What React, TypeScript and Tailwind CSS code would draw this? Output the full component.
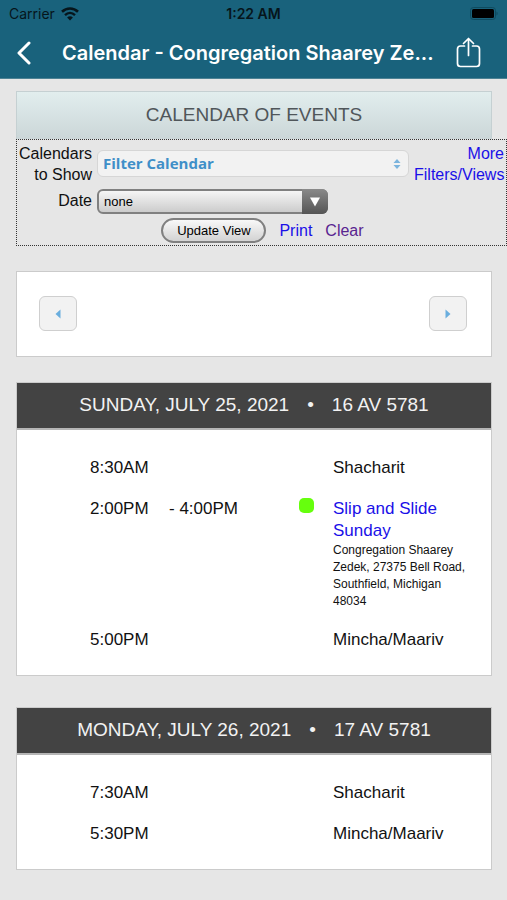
import { useState } from 'react'

type CalendarEvent = {
  start: string
  end?: string
  title: string
  location?: string
  color?: string
}

type CalendarDay = {
  date: string
  hebrewDate: string
  events: CalendarEvent[]
}

const days: CalendarDay[] = [
  {
    date: 'SUNDAY, JULY 25, 2021',
    hebrewDate: '16 AV 5781',
    events: [
      { start: '8:30AM', title: 'Shacharit' },
      {
        start: '2:00PM',
        end: '- 4:00PM',
        title: 'Slip and Slide Sunday',
        location:
          'Congregation Shaarey Zedek, 27375 Bell Road, Southfield, Michigan 48034',
        color: 'bg-[#66ff0d]',
      },
      { start: '5:00PM', title: 'Mincha/Maariv' },
    ],
  },
  {
    date: 'MONDAY, JULY 26, 2021',
    hebrewDate: '17 AV 5781',
    events: [
      { start: '7:30AM', title: 'Shacharit' },
      { start: '5:30PM', title: 'Mincha/Maariv' },
    ],
  },
]

function StatusBar() {
  return (
    <div className="grid h-[27px] grid-cols-3 items-center px-[9px] text-[14px] text-[#06151b]">
      <div className="flex items-center gap-[6px]">
        <span>Carrier</span>
        <svg aria-hidden="true" className="h-[14px] w-[18px]" viewBox="0 0 18 14" fill="none">
          <path d="M1 4.8C5.6 0.3 12.4 0.3 17 4.8" stroke="currentColor" strokeWidth="2.6" />
          <path d="M4 8.1C7 5.2 11 5.2 14 8.1" stroke="currentColor" strokeWidth="2.4" />
          <path d="M9 13.4L6.1 10.4C7.8 8.9 10.2 8.9 11.9 10.4Z" fill="currentColor" />
        </svg>
      </div>
      <span className="text-center font-semibold">1:22 AM</span>
      <svg
        aria-hidden="true"
        className="h-[13px] w-[28px] justify-self-end"
        viewBox="0 0 28 13"
      >
        <rect x="0.5" y="0.5" width="25" height="12" rx="3" fill="none" stroke="#0f4b5f" />
        <rect x="2" y="2" width="22" height="9" rx="1.5" fill="#000" />
        <path d="M26.5 4.5C28 5 28 8 26.5 8.5Z" fill="#0f4b5f" />
      </svg>
    </div>
  )
}

function AppHeader() {
  return (
    <header className="border-b border-[#4d8294] bg-[#19627c] font-['Inter',sans-serif]">
      <StatusBar />
      <div className="flex h-[51px] items-center pr-[26px] pl-4 text-white">
        <button type="button" aria-label="Back" className="w-[46px] shrink-0">
          <svg aria-hidden="true" className="h-6 w-4" viewBox="0 0 16 24" fill="none">
            <path
              d="M13 2L3 12L13 22"
              stroke="currentColor"
              strokeWidth="3"
              strokeLinecap="round"
              strokeLinejoin="round"
            />
          </svg>
        </button>
        <h1 className="min-w-0 flex-1 text-[20px] font-semibold whitespace-nowrap">
          Calendar - Congregation Shaarey Ze...
        </h1>
        <button type="button" aria-label="Share" className="shrink-0">
          <svg aria-hidden="true" className="h-[31px] w-[25px]" viewBox="0 0 25 31" fill="none">
            <g
              stroke="currentColor"
              strokeWidth="1.7"
              strokeLinecap="round"
              strokeLinejoin="round"
            >
              <path d="M8.5 9H4.5Q1.5 9 1.5 12V26.5Q1.5 29.5 4.5 29.5H20.5Q23.5 29.5 23.5 26.5V12Q23.5 9 20.5 9H16.5" />
              <path d="M12.5 18.5V1.5M7.5 6.5L12.5 1.5L17.5 6.5" />
            </g>
          </svg>
        </button>
      </div>
    </header>
  )
}

function FilterForm() {
  const [date, setDate] = useState('none')

  return (
    <form
      className="ml-4 border border-dotted border-[#333] px-[2px] pt-[3px] pb-[2px]"
      onSubmit={(e) => e.preventDefault()}
    >
      <div className="grid grid-cols-[73px_minmax(0,1fr)_90px] gap-x-[5px] text-[16px] leading-[21px]">
        <label htmlFor="calendars" className="text-right">
          Calendars to Show
        </label>
        <div className="pt-[7px]">
          <button
            id="calendars"
            type="button"
            className="flex h-[27px] w-full items-center justify-between rounded-md border border-[#d6d6d6] bg-[#f2f2f2] pr-[7px] pl-[5px] font-['Open_Sans',sans-serif] text-[15px] font-bold text-[#3f8fc8]"
          >
            Filter Calendar
            <svg aria-hidden="true" className="h-[10px] w-2" viewBox="0 0 8 10" fill="#7bb4dd">
              <path d="M4 0L7.5 4H0.5ZM4 10L0.5 6H7.5Z" />
            </svg>
          </button>
        </div>
        <a href="#filters" className="text-right text-[#1a10e8]">
          More Filters/Views
        </a>

        <label htmlFor="date" className="pt-[5px] text-right">
          Date
        </label>
        <div className="col-span-2 pt-[4px]">
          <div className="relative h-[25px] w-[231px]">
            <select
              id="date"
              value={date}
              onChange={(e) => setDate(e.target.value)}
              className="h-full w-full appearance-none rounded-md border-2 border-solid border-[#808080] bg-linear-to-b from-[#fafafa] to-[#c8c8c8] bg-origin-border pl-[5px] text-[13px] leading-[21px] text-black"
            >
              <option value="none">none</option>
            </select>
            <span className="pointer-events-none absolute inset-y-0 right-0 flex w-[26px] items-center justify-center rounded-r-md bg-linear-to-b from-[#8a8a8a] to-[#555]">
              <svg aria-hidden="true" className="h-[10px] w-3" viewBox="0 0 12 10" fill="#fff">
                <path d="M1 0.5H11L6 9.5Z" />
              </svg>
            </span>
          </div>
        </div>
      </div>

      <div className="flex items-center justify-center gap-[13px] pt-[4px] pl-[2px] text-[16px] leading-[21px]">
        <button
          type="submit"
          className="h-[25px] w-[105px] rounded-full border-2 border-[#808080] bg-linear-to-b from-[#fcfcfc] to-[#cfcfcf] bg-origin-border text-[13px] leading-[21px] text-black"
        >
          Update View
        </button>
        <a href="#print" className="text-[#1a10e8]">
          Print
        </a>
        <a href="#clear" className="text-[#592490]">
          Clear
        </a>
      </div>
    </form>
  )
}

function PagerButton({ label, path }: { label: string; path: string }) {
  return (
    <button
      type="button"
      aria-label={label}
      className="flex h-[35px] w-[38px] items-center justify-center rounded-md border border-[#cfcfcf] bg-[#f2f2f2]"
    >
      <svg aria-hidden="true" className="h-[10px] w-[6px]" viewBox="0 0 6 10" fill="#6aaede">
        <path d={path} />
      </svg>
    </button>
  )
}

function DayCard({ day }: { day: CalendarDay }) {
  return (
    <section className="border border-[#cbcbcb] bg-white">
      <h3 className="flex h-[47px] items-center justify-center gap-[18px] border-b-2 border-[#b5b5b5] bg-[#434343] text-[19px] text-[#f2f2f2]">
        <span>{day.date}</span>
        <span>•</span>
        <span>{day.hebrewDate}</span>
      </h3>
      <div className="pt-[17px] pr-[15px] pb-[15px] pl-[73px]">
        <table className="w-full table-fixed text-left text-[17px] leading-[22px]">
          <colgroup>
            <col className="w-[79px]" />
            <col className="w-[130px]" />
            <col className="w-[34px]" />
            <col />
          </colgroup>
          <tbody>
            {day.events.map((event) => (
              <tr key={event.start} className="align-top">
                <td className="pt-[10px] pb-[9px]">{event.start}</td>
                <td className="pt-[10px] pb-[9px]">{event.end}</td>
                <td className="pt-[10px] pb-[9px]">
                  {event.color && (
                    <span className={`block size-[15px] rounded-[5px] ${event.color}`} />
                  )}
                </td>
                <td className="pt-[10px] pb-[9px]">
                  {event.location ? (
                    <>
                      <a href="#event" className="block text-[#1a10e8]">
                        {event.title}
                      </a>
                      <p className="text-[12px] leading-[17px]">{event.location}</p>
                    </>
                  ) : (
                    event.title
                  )}
                </td>
              </tr>
            ))}
          </tbody>
        </table>
      </div>
    </section>
  )
}

export default function App() {
  return (
    <div className="min-h-screen bg-[#e6e6e6] font-['Liberation_Sans',Arial,sans-serif] text-[#111]">
      <AppHeader />
      <main className="pt-3 pb-8">
        <h2 className="mr-[15px] ml-4 flex h-[48px] items-center justify-center border border-b-0 border-[#c5d0d2] bg-linear-to-b from-[#e2eeee] to-[#cbd6d8] text-[19px] text-[#50565a]">
          CALENDAR OF EVENTS
        </h2>
        <FilterForm />

        <nav
          aria-label="Calendar pages"
          className="mt-[25px] mr-[15px] ml-4 flex justify-between border border-[#cbcbcb] bg-white pt-6 pr-6 pb-[25px] pl-[22px]"
        >
          <PagerButton label="Previous" path="M5.5 0.5V9.5L0.5 5Z" />
          <PagerButton label="Next" path="M0.5 0.5V9.5L5.5 5Z" />
        </nav>

        <div className="mt-[25px] mr-[15px] ml-4 grid gap-[31px]">
          {days.map((day) => (
            <DayCard key={day.date} day={day} />
          ))}
        </div>
      </main>
    </div>
  )
}
